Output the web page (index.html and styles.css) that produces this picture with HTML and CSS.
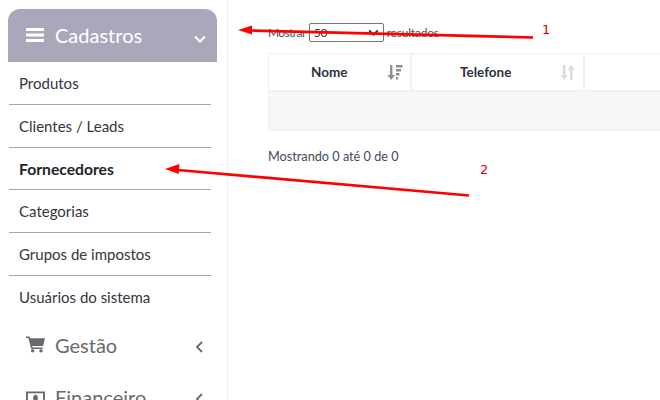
FILE: index.html
```html
<!DOCTYPE html>
<html lang="pt">
<head>
<meta charset="utf-8">
<title>Cadastros</title>
<link rel="stylesheet" href="styles.css">
</head>
<body>
<div class="page">
  <aside class="sidebar">
    <div class="menu-head">
      <svg class="burger" viewBox="0 0 18 14"><path d="M0 0h18v3H0zM0 5.500h18v3H0zM0 11h18v3H0z"/></svg>
      <span class="menu-title">Cadastros</span>
      <svg class="chev-down" viewBox="0 0 12 8"><path d="M1 1.500l5 5 5-5"/></svg>
    </div>
    <ul class="submenu">
      <li>Produtos</li>
      <li>Clientes / Leads</li>
      <li class="active">Fornecedores</li>
      <li>Categorias</li>
      <li>Grupos de impostos</li>
      <li>Usuários do sistema</li>
    </ul>
    <div class="menu-item">
      <svg class="mi-icon" viewBox="0 0 20 17"><path d="M0 0h3.600l.6 2H20l-2 8H6.600l.4 1.600h10.600v1.600H5.600L2.400 1.700H0z"/><circle cx="7" cy="15.200" r="1.800"/><circle cx="15.800" cy="15.200" r="1.800"/></svg>
      <span class="mi-label">Gestão</span>
      <svg class="chev-left" viewBox="0 0 8 12"><path d="M7 1L2 6l5 5"/></svg>
    </div>
    <div class="menu-item">
      <svg class="mi-icon mi-money" viewBox="0 0 20 17"><path fill-rule="evenodd" d="M0 1h20v14H0zM2 3v10h16V3z"/><path d="M10 4.500c2 0 2.500 2 2.500 3.500s-.5 3.500-2.500 3.500S7.500 9.500 7.500 8 8 4.500 10 4.500z"/></svg>
      <span class="mi-label">Financeiro</span>
      <svg class="chev-left" viewBox="0 0 8 12"><path d="M7 1L2 6l5 5"/></svg>
    </div>
  </aside>
  <main class="content">
    <div class="length">
      <span class="len-label">Mostrar</span>
      <span class="select"><span>50</span><svg class="sel-chev" viewBox="0 0 12 8"><path d="M1 1.500l5 5 5-5"/></svg></span>
      <span>resultados</span>
    </div>
    <div class="table">
      <div class="thead">
        <div class="th th-nome"><span>Nome</span>
          <svg class="sort dark" viewBox="0 0 16 15"><path d="M3 0h2.400v10H8l-3.800 5L.4 10H3z"/><path d="M9 0h6.500v2.500H9zM9 4h5v2.500H9zM9 8h3.500v2.500H9zM9 12h2v2.500H9z"/></svg>
        </div>
        <div class="th th-tel"><span>Telefone</span>
          <svg class="sort light" viewBox="0 0 16 15"><path d="M3 0h2.400v10H8l-3.800 5L.4 10H3z"/><path d="M10 15h2.400V5H15l-3.800-5L7.400 5H10z"/></svg>
        </div>
        <div class="th th-rest"></div>
      </div>
      <div class="tbody-row"></div>
    </div>
    <p class="info">Mostrando 0 até 0 de 0</p>
  </main>
  <svg class="annot" viewBox="0 0 660 400">
    <path class="a-line" d="M250 30.500L533 37.500"/>
    <path class="a-head" d="M238 30l14-4.500v9z"/>
    <path class="a-line" d="M178 170L469 195.500"/>
    <path class="a-head" d="M165 169l14.500-5-.8 10z"/>
    <text class="a-num" x="542" y="34">1</text>
    <text class="a-num" x="480" y="174">2</text>
  </svg>
</div>
</body>
</html>
```

FILE: styles.css
```css
* { box-sizing: border-box; }
html, body { margin: 0; padding: 0; background: #fff; }
body { font-family: "Lato", "Noto Sans", sans-serif; color: #3b4151; overflow: hidden; }
.page { position: relative; width: 660px; height: 400px; overflow: hidden; display: flex; }

.sidebar { width: 228px; height: 400px; flex: none; border-right: 1px solid #eeeeee; padding: 9px 0 0 8px; overflow: hidden; }
.menu-head { width: 209px; height: 53px; background: #a8a8ba; border-radius: 12px 12px 0 0; display: flex; align-items: center; padding: 0 11px 2px 18px; color: #fff; }
.burger { width: 18px; height: 14px; fill: #fff; flex: none; }
.menu-title { font-size: 20px; margin-left: 11px; flex: 1; }
.chev-down { width: 12px; height: 8px; fill: none; stroke: #fff; stroke-width: 2; margin-top: 8px; }

.submenu { list-style: none; margin: 0; padding: 0 0 0 1px; width: 203px; }
.submenu li { height: 42.750px; line-height: 43px; padding-left: 10px; font-size: 15px; color: #33363f; border-bottom: 1px solid #a6a6a6; }
.submenu li:last-child { border-bottom: 0; }
.submenu li.active { font-weight: 700; font-size: 15.700px; color: #22252c; }

.menu-item { display: flex; align-items: center; height: 52px; padding: 0 0 0 18px; width: 209px; color: #666a70; }
.mi-icon { width: 19px; height: 17px; fill: #666a70; flex: none; }
.mi-money { margin-top: 4px; }
.mi-label { font-size: 20px; margin-left: 10px; flex: 1; }
.chev-left { width: 8px; height: 12px; fill: none; stroke: #666a70; stroke-width: 1.800; margin: 5px 14px 0 0; }

.content { flex: 1; padding: 22px 0 0 40px; min-width: 0; }
.length { display: flex; align-items: center; gap: 3px; font-size: 12px; height: 20px; color: #4a5160; letter-spacing: -.2px; }
.len-label { letter-spacing: -.6px; }
.select { width: 75px; height: 19px; border: 1px solid #767676; border-radius: 2px; display: flex; align-items: center; justify-content: space-between; padding: 0 4px; color: #333; }
.sel-chev { width: 11px; height: 7px; fill: none; stroke: #333; stroke-width: 2; }

.table { margin-top: 11px; border: 1px solid #f1f1f1; border-right: 0; width: 392px; }
.thead { display: flex; height: 38px; border-bottom: 2px solid #f1f1f1; }
.th { display: flex; align-items: center; position: relative; font-weight: 700; font-size: 13.500px; color: #2d3140; border-right: 2px solid #f1f1f1; }
.th-nome { width: 143px; padding-left: 42px; }
.th-tel { width: 173px; padding-left: 48px; }
.th-rest { flex: 1; border-right: 0; }
.sort { position: absolute; width: 16px; height: 15px; top: 11px; }
.th-nome .sort { right: 7px; }
.th-tel .sort { right: 7px; }
.sort.dark { fill: #8f8f8f; }
.sort.light { fill: #dcdcdc; }
.tbody-row { height: 38px; background: #f7f7f7; border-bottom: 1px solid #f1f1f1; }

.info { margin: 17px 0 0; font-size: 12.700px; color: #3f4a5c; }

.annot { position: absolute; left: 0; top: 0; width: 660px; height: 400px; pointer-events: none; }
.a-line { stroke: #fe0000; stroke-width: 2.700; fill: none; }
.a-head { fill: #fe0000; }
.a-num { fill: #e00000; font-family: "DejaVu Sans", sans-serif; font-size: 13px; }
```
